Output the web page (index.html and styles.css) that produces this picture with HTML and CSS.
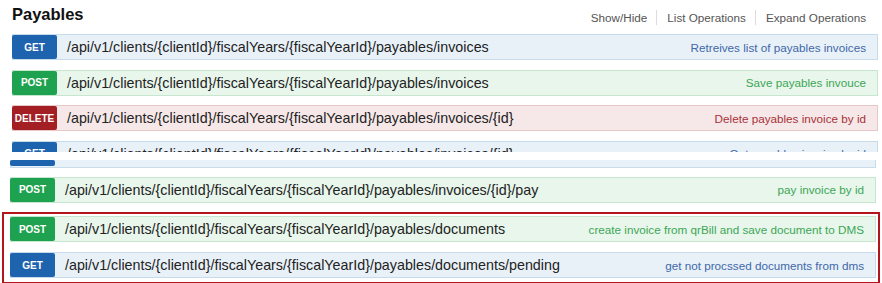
FILE: index.html
```html
<!DOCTYPE html>
<html>
<head>
  <title>Payables</title>
  <meta name="viewport" content="width=device-width, initial-scale=1.0">
  <link rel="stylesheet" href="styles.css">
</head>
<body>
  <div class="resource">
    <div class="heading">
      <h2 class="title">Payables</h2>
      <ul class="options">
        <li>Show/Hide</li>
        <li>List Operations</li>
        <li>Expand Operations</li>
      </ul>
    </div>

    <div class="ops top">
      <div class="op get">
        <span class="method">GET</span>
        <span class="path">/api/v1/clients/{clientId}/fiscalYears/{fiscalYearId}/payables/invoices</span>
        <span class="desc">Retreives list of payables invoices</span>
      </div>
      <div class="op post">
        <span class="method">POST</span>
        <span class="path">/api/v1/clients/{clientId}/fiscalYears/{fiscalYearId}/payables/invoices</span>
        <span class="desc">Save payables invouce</span>
      </div>
      <div class="op delete">
        <span class="method">DELETE</span>
        <span class="path">/api/v1/clients/{clientId}/fiscalYears/{fiscalYearId}/payables/invoices/{id}</span>
        <span class="desc">Delete payables invoice by id</span>
      </div>
      <div class="cut">
        <div class="op get">
          <span class="method">GET</span>
          <span class="path">/api/v1/clients/{clientId}/fiscalYears/{fiscalYearId}/payables/invoices/{id}</span>
          <span class="desc">Get payables invoice by id</span>
        </div>
      </div>
    </div>

    <div class="ops bottom">
      <div class="op get strip">
        <span class="method"></span>
      </div>
      <div class="op post">
        <span class="method">POST</span>
        <span class="path">/api/v1/clients/{clientId}/fiscalYears/{fiscalYearId}/payables/invoices/{id}/pay</span>
        <span class="desc">pay invoice by id</span>
      </div>
      <div class="marked">
        <div class="op post">
          <span class="method">POST</span>
          <span class="path">/api/v1/clients/{clientId}/fiscalYears/{fiscalYearId}/payables/documents</span>
          <span class="desc">create invoice from qrBill and save document to DMS</span>
        </div>
        <div class="op get">
          <span class="method">GET</span>
          <span class="path">/api/v1/clients/{clientId}/fiscalYears/{fiscalYearId}/payables/documents/pending</span>
          <span class="desc">get not procssed documents from dms</span>
        </div>
      </div>
    </div>
  </div>
</body>
</html>
```

FILE: styles.css
```css
body {
  margin: 0;
  background: #fff;
  font-family: "Liberation Sans", Arial, sans-serif;
  color: #222;
}
.resource {
  width: 882px;
  height: 283px;
  overflow: hidden;
}
.heading {
  display: flex;
  justify-content: space-between;
  align-items: flex-start;
  padding: 3px 16px 0 12px;
  height: 30px;
  box-sizing: border-box;
}
.title {
  margin: 0;
  font-size: 16.5px;
  line-height: 22px;
  font-weight: bold;
  color: #111;
}
.options {
  list-style: none;
  margin: 7px 0 0 0;
  padding: 0;
  display: flex;
  font-size: 11.7px;
  line-height: 15px;
  color: #555;
}
.options li {
  padding: 0 9px 0 10px;
  border-left: 1px solid #dcdcdc;
}
.options li:first-child {
  border-left: none;
}
.options li:last-child {
  padding-right: 0;
}

.ops.top {
  margin: 4px 4px 0 12px;
}
.ops.bottom {
  margin: 0 6px 0 10px;
}

.op {
  display: flex;
  align-items: center;
  height: 26px;
  box-sizing: border-box;
  border: 1px solid;
  margin-bottom: 9.5px;
}
.method {
  flex: none;
  width: 45px;
  height: 24px;
  margin-left: -1px;
  display: flex;
  align-items: center;
  justify-content: center;
  color: #fff;
  font-size: 10px;
  font-weight: bold;
  border-radius: 2px;
}
.path {
  flex: 1;
  padding-left: 10px;
  font-size: 14.3px;
  white-space: nowrap;
  color: #222;
}
.desc {
  flex: none;
  padding-right: 11px;
  font-size: 11.7px;
  white-space: nowrap;
}

.get { background: #e9f1f8; border-color: #c8dbeb; }
.get .method { background: #1d63ae; }
.get .desc { color: #4068a8; }

.post { background: #e8f6ec; border-color: #c6e6d0; }
.post .method { background: #1fa24f; }
.post .desc { color: #3da656; }

.delete { background: #f6e8e8; border-color: #e9c7c8; }
.delete .method { background: #a31f24; }
.delete .desc { color: #a8323a; }

/* spliced rows from the original capture */
.cut {
  height: 11px;
  overflow: hidden;
  margin-bottom: 8px;
}
.cut .op {
  margin-bottom: 0;
}
.op.strip {
  height: 8px;
  align-items: flex-end;
  border-top: none;
  margin-bottom: 9px;
}
.op.strip .method {
  height: 6px;
  margin-bottom: 1px;
}

.marked {
  margin: 0 -4px 0 -8px;
  padding: 2px 2px 4px 6px;
  border: 2px solid #b2161c;
}
.marked .op {
  margin-bottom: 10px;
}
.marked .op:last-child {
  margin-bottom: 0;
}
```
